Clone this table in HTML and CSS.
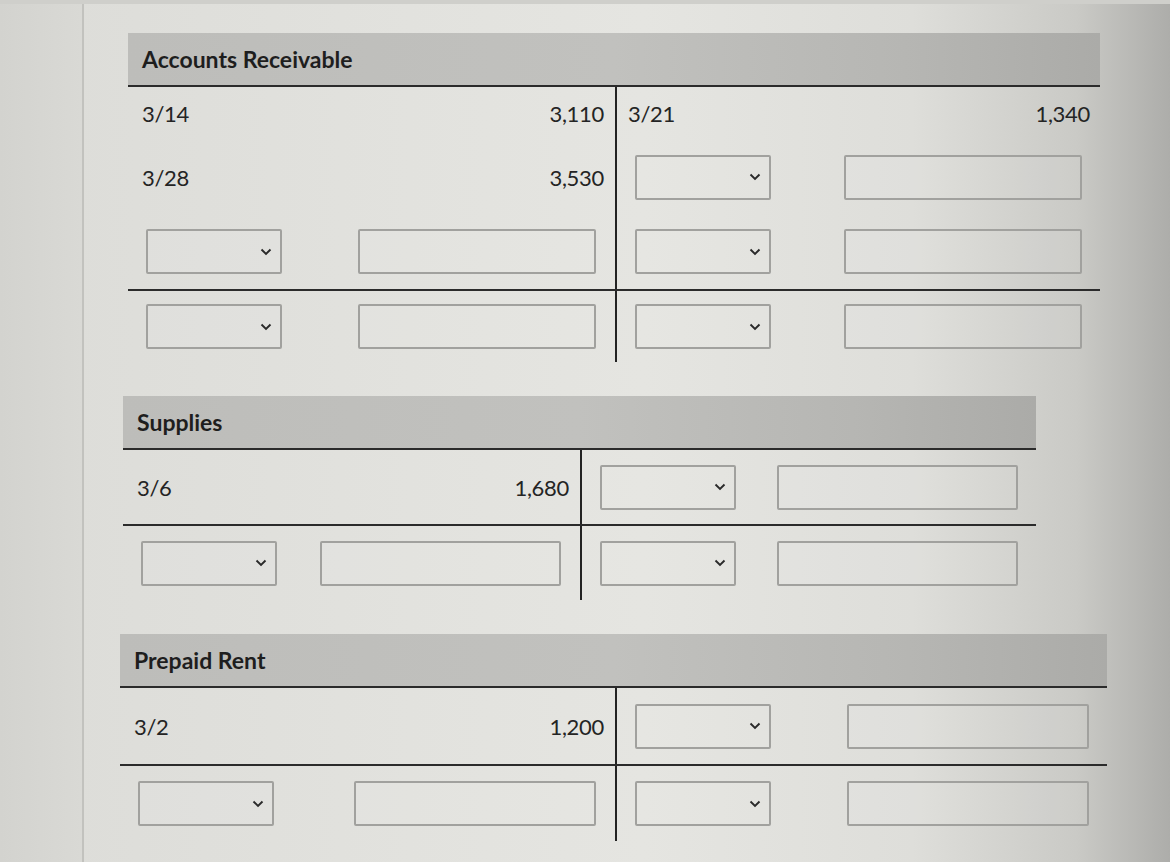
FILE: index.html
```html
<!DOCTYPE html>
<html>
<head>
<meta charset="utf-8">
<link rel="stylesheet" href="styles.css">
</head>
<body>
<div class="page">
  <div class="sidebar"></div>
  <div class="content">

    <section class="ta ta-ar">
      <div class="ta-head">Accounts Receivable</div>
      <div class="row h1">
        <div class="cell txt"><span>3/14</span><span>3,110</span></div>
        <div class="cell txt right"><span>3/21</span><span>1,340</span></div>
      </div>
      <div class="row h2">
        <div class="cell txt"><span>3/28</span><span>3,530</span></div>
        <div class="cell boxes right">
          <div class="select"><svg width="12" height="8" viewBox="0 0 12 8"><polyline points="1.5,1.5 6,6 10.5,1.5"/></svg></div>
          <div class="input"></div>
        </div>
      </div>
      <div class="row h3">
        <div class="cell boxes">
          <div class="select"><svg width="12" height="8" viewBox="0 0 12 8"><polyline points="1.5,1.5 6,6 10.5,1.5"/></svg></div>
          <div class="input"></div>
        </div>
        <div class="cell boxes right">
          <div class="select"><svg width="12" height="8" viewBox="0 0 12 8"><polyline points="1.5,1.5 6,6 10.5,1.5"/></svg></div>
          <div class="input"></div>
        </div>
      </div>
      <div class="row total h4">
        <div class="cell boxes">
          <div class="select"><svg width="12" height="8" viewBox="0 0 12 8"><polyline points="1.5,1.5 6,6 10.5,1.5"/></svg></div>
          <div class="input"></div>
        </div>
        <div class="cell boxes right">
          <div class="select"><svg width="12" height="8" viewBox="0 0 12 8"><polyline points="1.5,1.5 6,6 10.5,1.5"/></svg></div>
          <div class="input"></div>
        </div>
      </div>
    </section>

    <section class="ta ta-sup">
      <div class="ta-head">Supplies</div>
      <div class="row h5">
        <div class="cell txt"><span>3/6</span><span>1,680</span></div>
        <div class="cell boxes right">
          <div class="select"><svg width="12" height="8" viewBox="0 0 12 8"><polyline points="1.5,1.5 6,6 10.5,1.5"/></svg></div>
          <div class="input"></div>
        </div>
      </div>
      <div class="row total h6">
        <div class="cell boxes">
          <div class="select"><svg width="12" height="8" viewBox="0 0 12 8"><polyline points="1.5,1.5 6,6 10.5,1.5"/></svg></div>
          <div class="input"></div>
        </div>
        <div class="cell boxes right">
          <div class="select"><svg width="12" height="8" viewBox="0 0 12 8"><polyline points="1.5,1.5 6,6 10.5,1.5"/></svg></div>
          <div class="input"></div>
        </div>
      </div>
    </section>

    <section class="ta ta-rent">
      <div class="ta-head">Prepaid Rent</div>
      <div class="row h7">
        <div class="cell txt"><span>3/2</span><span>1,200</span></div>
        <div class="cell boxes right">
          <div class="select"><svg width="12" height="8" viewBox="0 0 12 8"><polyline points="1.5,1.5 6,6 10.5,1.5"/></svg></div>
          <div class="input"></div>
        </div>
      </div>
      <div class="row total h8">
        <div class="cell boxes">
          <div class="select"><svg width="12" height="8" viewBox="0 0 12 8"><polyline points="1.5,1.5 6,6 10.5,1.5"/></svg></div>
          <div class="input"></div>
        </div>
        <div class="cell boxes right">
          <div class="select"><svg width="12" height="8" viewBox="0 0 12 8"><polyline points="1.5,1.5 6,6 10.5,1.5"/></svg></div>
          <div class="input"></div>
        </div>
      </div>
    </section>

  </div>
</div>
</body>
</html>
```

FILE: styles.css
```css
html, body {
  margin: 0;
  padding: 0;
  height: 100%;
}

body {
  font-family: Lato, "Liberation Sans", sans-serif;
  color: #222;
  background: #dddcd8;
  overflow: hidden;
}

.page {
  display: flex;
  width: 1170px;
  height: 862px;
  border-top: 4px solid #cfcfcb;
  box-sizing: border-box;
  background: linear-gradient(90deg, #dcdcd8 0%, #e2e2de 35%, #e5e5e1 55%, #dededa 78%, #cacac6 92%, #adadaa 100%);
}

.sidebar {
  width: 82px;
  flex: none;
  background: linear-gradient(90deg, #d3d3cf 0%, #d9d9d5 100%);
  border-right: 2px solid #c2c2be;
}

.content {
  flex: 1;
  display: flex;
  flex-direction: column;
  gap: 34px;
  padding-top: 29px;
}

.ta {
  display: flex;
  flex-direction: column;
}

.ta-ar   { margin-left: 44px; width: 972px; --left: 487px; --inw: 238px; }
.ta-sup  { margin-left: 39px; width: 913px; --left: 457px; --inw: 241px; }
.ta-rent { margin-left: 36px; width: 987px; --left: 495px; --inw: 242px; }

.ta-head {
  height: 52px;
  display: flex;
  align-items: center;
  padding-left: 14px;
  font-weight: 700;
  font-size: 23px;
  letter-spacing: 0;
  color: #1e1e1e;
  background: linear-gradient(90deg, #bdbdba 0%, #c1c1be 50%, #b6b6b3 80%, #ababa8 100%);
  border-bottom: 2px solid #2b2b2b;
}

.row {
  display: grid;
  grid-template-columns: var(--left) 1fr;
}

.row.total {
  border-top: 2px solid #2b2b2b;
}

.h1 { height: 53px; }
.h2 { height: 74px; }
.h3 { height: 75px; }
.h4 { height: 71px; }
.h5 { height: 74px; }
.h6 { height: 74px; }
.h7 { height: 76px; }
.h8 { height: 75px; }

.cell {
  display: flex;
  align-items: center;
  justify-content: space-between;
}

.cell.right {
  border-left: 2px solid #232323;
}

.cell.txt {
  padding: 0 11px 0 14px;
  font-size: 22px;
  letter-spacing: -0.3px;
  color: #242424;
}

.cell.txt.right {
  padding: 0 10px 0 11px;
}

.cell.boxes {
  padding: 0 19px 0 18px;
}

.cell.boxes.right {
  padding: 0 18px 0 18px;
}

.select,
.input {
  height: 45px;
  box-sizing: border-box;
  border: 2px solid #a1a19e;
  border-radius: 2px;
  background: rgba(255, 255, 255, 0.06);
}

.select {
  width: 136px;
  display: flex;
  align-items: center;
  justify-content: flex-end;
  padding-right: 8px;
}

.select svg polyline {
  fill: none;
  stroke: #2a2a2a;
  stroke-width: 1.9;
}

.input {
  width: var(--inw);
}
```
